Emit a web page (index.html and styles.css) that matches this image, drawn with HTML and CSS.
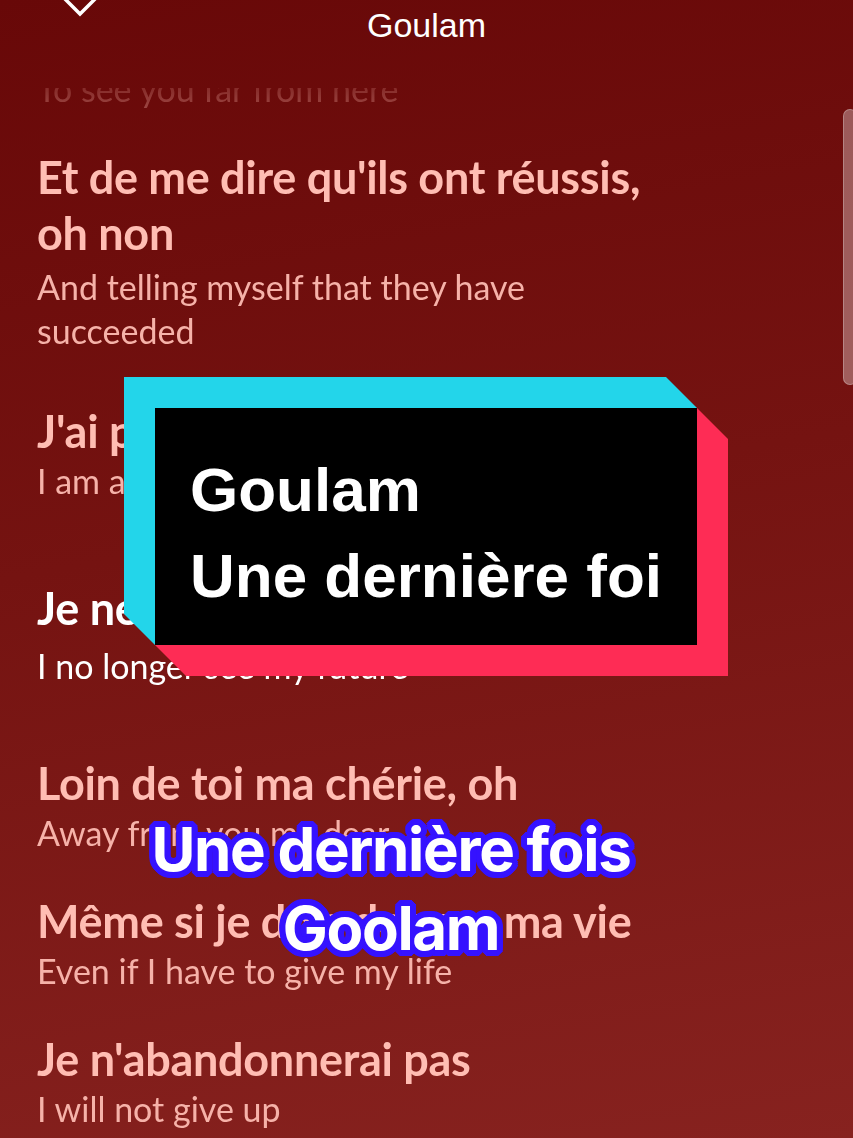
FILE: index.html
```html
<!DOCTYPE html>
<html lang="fr">
<head>
    <meta charset="UTF-8">
    <meta name="viewport" content="width=device-width, initial-scale=1.0">
    <title>Goulam - Paroles</title>
    <link rel="stylesheet" href="styles.css">
</head>
<body>
    <div class="screen">
        <header class="topbar">
            <svg class="chevron" width="60" height="24" viewBox="0 0 60 24">
                <path d="M10 -6 L30 14 L50 -6" fill="none" stroke="#fff" stroke-width="3.5" stroke-linejoin="miter"/>
            </svg>
            <span class="title">Goulam</span>
        </header>

        <div class="lyrics">
            <div class="lyrics-inner">
                <div class="verse faded">
                    <p class="tr">To see you far from here</p>
                </div>
                <div class="verse split">
                    <p class="orig">Et de me dire qu'ils ont réussis,<br>oh non</p>
                    <p class="tr">And telling myself that they have<br>succeeded</p>
                </div>
                <div class="verse gap-lg">
                    <p class="orig">J'ai peur de te perdre</p>
                    <p class="tr">I am afraid of losing you</p>
                </div>
                <div class="verse active gap-xl">
                    <p class="orig">Je ne vois plus mon futur</p>
                    <p class="tr">I no longer see my future</p>
                </div>
                <div class="verse gap-md">
                    <p class="orig">Loin de toi ma chérie, oh</p>
                    <p class="tr">Away from you my dear</p>
                </div>
                <div class="verse">
                    <p class="orig">Même si je dois donner ma vie</p>
                    <p class="tr">Even if I have to give my life</p>
                </div>
                <div class="verse">
                    <p class="orig">Je n'abandonnerai pas</p>
                    <p class="tr">I will not give up</p>
                </div>
            </div>
        </div>

        <div class="scrollbar"></div>

        <div class="card">
            <svg class="card-bg" width="604" height="300" viewBox="0 0 604 300">
                <polygon points="31,31 573,31 604,62 604,299 62,299 31,268" fill="#fe2c55"/>
                <polygon points="0,0 542,0 573,31 573,268 31,268 0,237" fill="#23d5ea"/>
                <rect x="31" y="31" width="542" height="237" fill="#000"/>
            </svg>
            <div class="card-text">Goulam<br>Une dernière foi</div>
        </div>

        <div class="caption">Une dernière fois<br>Goolam</div>
    </div>
</body>
</html>
```

FILE: styles.css
```css
body {
    margin: 0;
    padding: 0;
    background: #6a0909;
}

.screen {
    position: relative;
    width: 853px;
    height: 1138px;
    overflow: hidden;
    background: linear-gradient(170deg, #680808 0%, #751311 45%, #87221f 100%);
    font-family: 'Lato', 'Noto Sans', sans-serif;
}

.topbar {
    height: 88px;
    display: flex;
    justify-content: center;
    align-items: flex-start;
}

.chevron {
    position: absolute;
    left: 50px;
    top: 0;
}

.title {
    margin-top: 8px;
    font-family: 'Liberation Sans', Arial, sans-serif;
    font-size: 34px;
    line-height: 34px;
    color: #fff;
}

.lyrics {
    height: 1050px;
    overflow: hidden;
    -webkit-mask-image: linear-gradient(to bottom, rgba(0, 0, 0, 0.4) 0, #000 40px);
    mask-image: linear-gradient(to bottom, rgba(0, 0, 0, 0.4) 0, #000 40px);
}

.lyrics-inner {
    margin-top: -21px;
    padding-left: 37px;
}

.verse {
    padding-bottom: 38px;
}

.verse.split .tr {
    padding-top: 4px;
}

.verse.gap-lg {
    padding-top: 12px;
}

.verse.gap-xl {
    padding-top: 39px;
}

.verse.active .tr {
    padding-top: 8px;
}

.verse.gap-md {
    padding-top: 29px;
}

.verse p {
    margin: 0;
}

.orig {
    font-size: 45px;
    line-height: 56px;
    font-weight: 700;
    letter-spacing: -0.3px;
    color: #ffbdb3;
}

.tr {
    font-size: 34px;
    line-height: 44px;
    font-weight: 400;
    color: #f6b2a9;
}

.faded .tr {
    opacity: 0.5;
}

.active .orig,
.active .tr {
    color: #fff;
}

.scrollbar {
    position: absolute;
    left: 843px;
    top: 109px;
    width: 14px;
    height: 276px;
    border-radius: 7px;
    background: rgba(255, 255, 255, 0.32);
    box-shadow: inset 0 0 0 1px rgba(255, 255, 255, 0.25);
}

.card {
    position: absolute;
    left: 124px;
    top: 377px;
    width: 604px;
    height: 300px;
}

.card-bg {
    position: absolute;
    left: 0;
    top: 0;
}

.card-text {
    position: relative;
    padding: 70px 0 0 66px;
    font-family: 'Liberation Sans', Arial, sans-serif;
    font-weight: 700;
    font-size: 62px;
    line-height: 86px;
    color: #fff;
}

.caption {
    position: absolute;
    left: 96px;
    top: 810px;
    width: 590px;
    text-align: center;
    font-family: 'Inter', sans-serif;
    font-weight: 700;
    font-size: 60px;
    line-height: 79px;
    letter-spacing: -1.3px;
    color: #fff;
    text-shadow:
        6px 0 0 #3512ff, -6px 0 0 #3512ff, 0 6px 0 #3512ff, 0 -6px 0 #3512ff,
        5px 3px 0 #3512ff, -5px 3px 0 #3512ff, 5px -3px 0 #3512ff, -5px -3px 0 #3512ff,
        3px 5px 0 #3512ff, -3px 5px 0 #3512ff, 3px -5px 0 #3512ff, -3px -5px 0 #3512ff,
        4px 4px 0 #3512ff, -4px 4px 0 #3512ff, 4px -4px 0 #3512ff, -4px -4px 0 #3512ff,
        2px 6px 0 #3512ff, -2px 6px 0 #3512ff, 2px -6px 0 #3512ff, -2px -6px 0 #3512ff,
        6px 2px 0 #3512ff, -6px 2px 0 #3512ff, 6px -2px 0 #3512ff, -6px -2px 0 #3512ff;
}
```
